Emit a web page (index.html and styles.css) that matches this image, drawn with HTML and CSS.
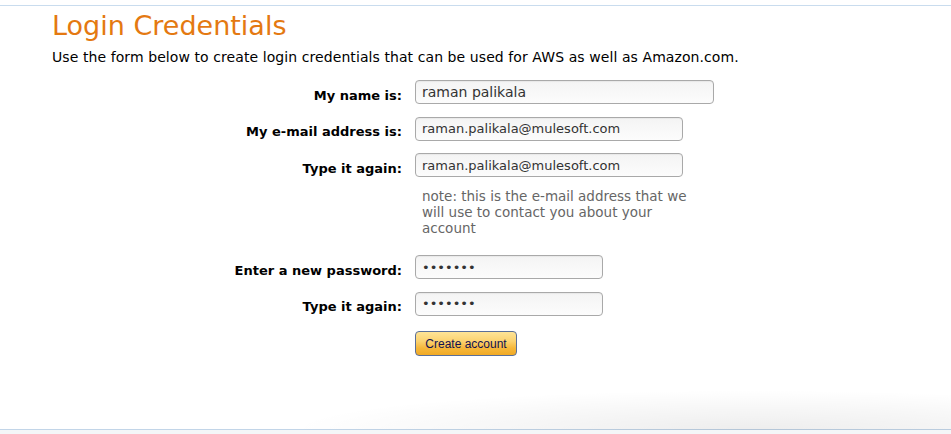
FILE: index.html
```html
<!DOCTYPE html>
<html>
<head>
<meta charset="utf-8">
<link rel="stylesheet" href="styles.css">
</head>
<body>
<div class="page">
  <div class="top-rule"></div>
  <div class="content">
    <h1 class="title">Login Credentials</h1>
    <p class="intro">Use the form below to create login credentials that can be used for AWS as well as Amazon.com.</p>
    <form class="form">
      <label class="label">My name is:</label>
      <div class="field"><input class="input input-name" type="text" value="raman palikala"></div>

      <label class="label">My e-mail address is:</label>
      <div class="field"><input class="input input-email" type="text" value="raman.palikala@mulesoft.com"></div>

      <label class="label">Type it again:</label>
      <div class="field"><input class="input input-email" type="text" value="raman.palikala@mulesoft.com"></div>

      <div></div>
      <div class="note">note: this is the e-mail address that we will use to contact you about your account</div>

      <label class="label">Enter a new password:</label>
      <div class="field"><input class="input input-pass" type="password" value="1234567"></div>

      <label class="label">Type it again:</label>
      <div class="field"><input class="input input-pass" type="password" value="1234567"></div>

      <div></div>
      <div class="field"><button class="btn" type="button">Create account</button></div>
    </form>
  </div>
  <div class="footer"></div>
</div>
</body>
</html>
```
FILE: styles.css
```css
html, body {
  margin: 0;
  padding: 0;
  background: #ffffff;
}
.page {
  width: 951px;
  height: 434px;
  display: flex;
  flex-direction: column;
  font-family: "DejaVu Sans", Verdana, sans-serif;
  color: #000;
}
.top-rule {
  margin-top: 5px;
  height: 1px;
  background: #c9dcee;
}
.content {
  padding-left: 52px;
  flex: 1;
}
.title {
  margin: 5px 0 0 0;
  font-size: 27px;
  font-weight: normal;
  line-height: 30px;
  color: #e47911;
}
.intro {
  margin: 8px 0 0 0;
  font-size: 14px;
  letter-spacing: 0.08px;
  line-height: 16px;
}
.form {
  display: grid;
  grid-template-columns: 350px auto;
  column-gap: 13px;
  row-gap: 12.5px;
  margin-top: 15px;
  align-items: center;
}
.label {
  font-size: 13px;
  font-weight: bold;
  text-align: right;
  padding-top: 7px;
  line-height: 16px;
}
.field {
  display: flex;
}
.input {
  box-sizing: border-box;
  height: 24px;
  margin: 0;
  border: 1px solid #a9a9a9;
  border-radius: 4px;
  padding: 0 6px;
  font-family: "DejaVu Sans", Verdana, sans-serif;
  font-size: 13px;
  color: #333;
  background: linear-gradient(#f4f4f4, #fcfcfc);
  box-shadow: inset 0 1px 1px rgba(0,0,0,0.05);
}
.input-name { width: 299px; font-size: 14px; }
.input-email { width: 268px; }
.input-pass { width: 188px; }
.note {
  font-size: 13.5px;
  line-height: 16px;
  color: #666;
  width: 285px;
  padding-left: 7px;
  margin: -2px 0 7px 0;
}
.btn {
  box-sizing: border-box;
  width: 102px;
  height: 25px;
  margin-top: 3px;
  border: 1px solid #5b6f98;
  border-radius: 4px;
  background: linear-gradient(#fee497 0%, #fbd270 40%, #f6b73a 70%, #f1aa25 100%);
  font-family: "Liberation Sans", Arial, sans-serif;
  font-size: 12px;
  color: #101050;
  padding: 0;
}
.footer {
  position: relative;
  height: 4px;
  border-top: 1px solid #c2d5e8;
  background: #f4f6f8;
}
.footer::before {
  content: "";
  position: absolute;
  left: 290px;
  right: 0;
  bottom: 100%;
  height: 40px;
  background: radial-gradient(ellipse 70% 100% at 70% 100%, rgba(0,0,0,0.07), rgba(0,0,0,0) 100%);
  pointer-events: none;
}
```
